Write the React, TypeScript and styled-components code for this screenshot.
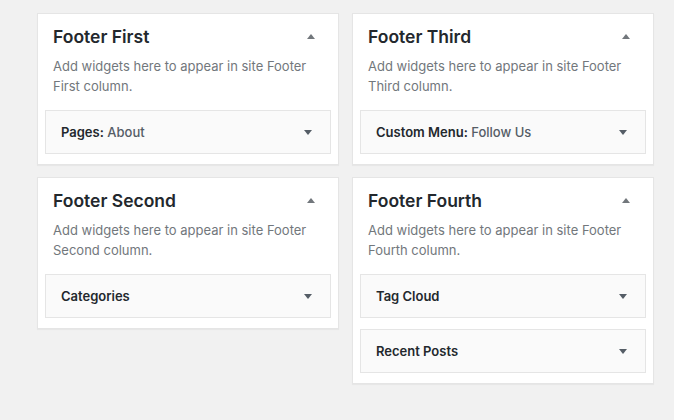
import React from "react";
import styled, { createGlobalStyle } from "styled-components";

const GlobalStyle = createGlobalStyle`
  html, body {
    margin: 0;
    padding: 0;
    background: #f1f1f1;
  }
  body {
    font-family: Inter, "Liberation Sans", Arial, sans-serif;
    color: #23282d;
    -webkit-font-smoothing: antialiased;
  }
`;

type WidgetItem = {
  name: string;
  title?: string;
};

type Sidebar = {
  name: string;
  widgets: WidgetItem[];
};

const columns: Sidebar[][] = [
  [
    { name: "First", widgets: [{ name: "Pages", title: "About" }] },
    { name: "Second", widgets: [{ name: "Categories" }] },
  ],
  [
    { name: "Third", widgets: [{ name: "Custom Menu", title: "Follow Us" }] },
    {
      name: "Fourth",
      widgets: [{ name: "Tag Cloud" }, { name: "Recent Posts" }],
    },
  ],
];

const Page = styled.div`
  display: flex;
  align-items: flex-start;
  gap: 13px;
  padding: 13px 0 0 37px;
  min-height: 420px;
  box-sizing: border-box;
`;

const Column = styled.div`
  display: flex;
  flex-direction: column;
  gap: 12px;
  width: 302px;
`;

const SidebarCard = styled.div`
  background: #fff;
  border: 1px solid #e5e5e5;
  box-shadow: 0 1px 1px rgba(0, 0, 0, 0.04);
  padding: 10px 0 10px;
`;

const SidebarHeader = styled.div`
  display: flex;
  align-items: center;
  justify-content: space-between;
  padding: 0 23px 0 15px;
`;

const SidebarTitle = styled.h2`
  margin: 0;
  font-size: 17.5px;
  line-height: 25px;
  font-weight: 600;
  color: #23282d;
`;

const Description = styled.p`
  margin: 7px 0 14px;
  padding: 0 15px;
  font-size: 13px;
  line-height: 20px;
  color: #72777c;
`;

const WidgetList = styled.div`
  display: flex;
  flex-direction: column;
  gap: 11px;
  padding: 0 7px;
`;

const WidgetTop = styled.div`
  display: flex;
  align-items: center;
  justify-content: space-between;
  height: 44px;
  box-sizing: border-box;
  padding: 0 18px 0 15px;
  background: #fafafa;
  border: 1px solid #e5e5e5;
`;

const WidgetName = styled.h3`
  margin: 0;
  font-size: 13px;
  font-weight: 600;
  color: #23282d;
`;

const InWidgetTitle = styled.span`
  font-weight: 500;
  color: #555d66;
`;

const Arrow = styled.span<{ $up?: boolean }>`
  width: 0;
  height: 0;
  border-left: 4px solid transparent;
  border-right: 4px solid transparent;
  ${({ $up }) =>
    $up
      ? "border-bottom: 5px solid #72777c;"
      : "border-top: 5px solid #555d66;"}
`;

const SidebarBox = ({ sidebar }: { sidebar: Sidebar }) => (
  <SidebarCard>
    <SidebarHeader>
      <SidebarTitle>Footer {sidebar.name}</SidebarTitle>
      <Arrow $up />
    </SidebarHeader>
    <Description>
      Add widgets here to appear in site Footer {sidebar.name} column.
    </Description>
    <WidgetList>
      {sidebar.widgets.map((w) => (
        <WidgetTop key={w.name}>
          <WidgetName>
            {w.name}
            {w.title ? ":" : ""}
            {w.title && <InWidgetTitle> {w.title}</InWidgetTitle>}
          </WidgetName>
          <Arrow />
        </WidgetTop>
      ))}
    </WidgetList>
  </SidebarCard>
);

const App = () => (
  <>
    <GlobalStyle />
    <Page>
      {columns.map((col, i) => (
        <Column key={i}>
          {col.map((s) => (
            <SidebarBox key={s.name} sidebar={s} />
          ))}
        </Column>
      ))}
    </Page>
  </>
);

export default App;
